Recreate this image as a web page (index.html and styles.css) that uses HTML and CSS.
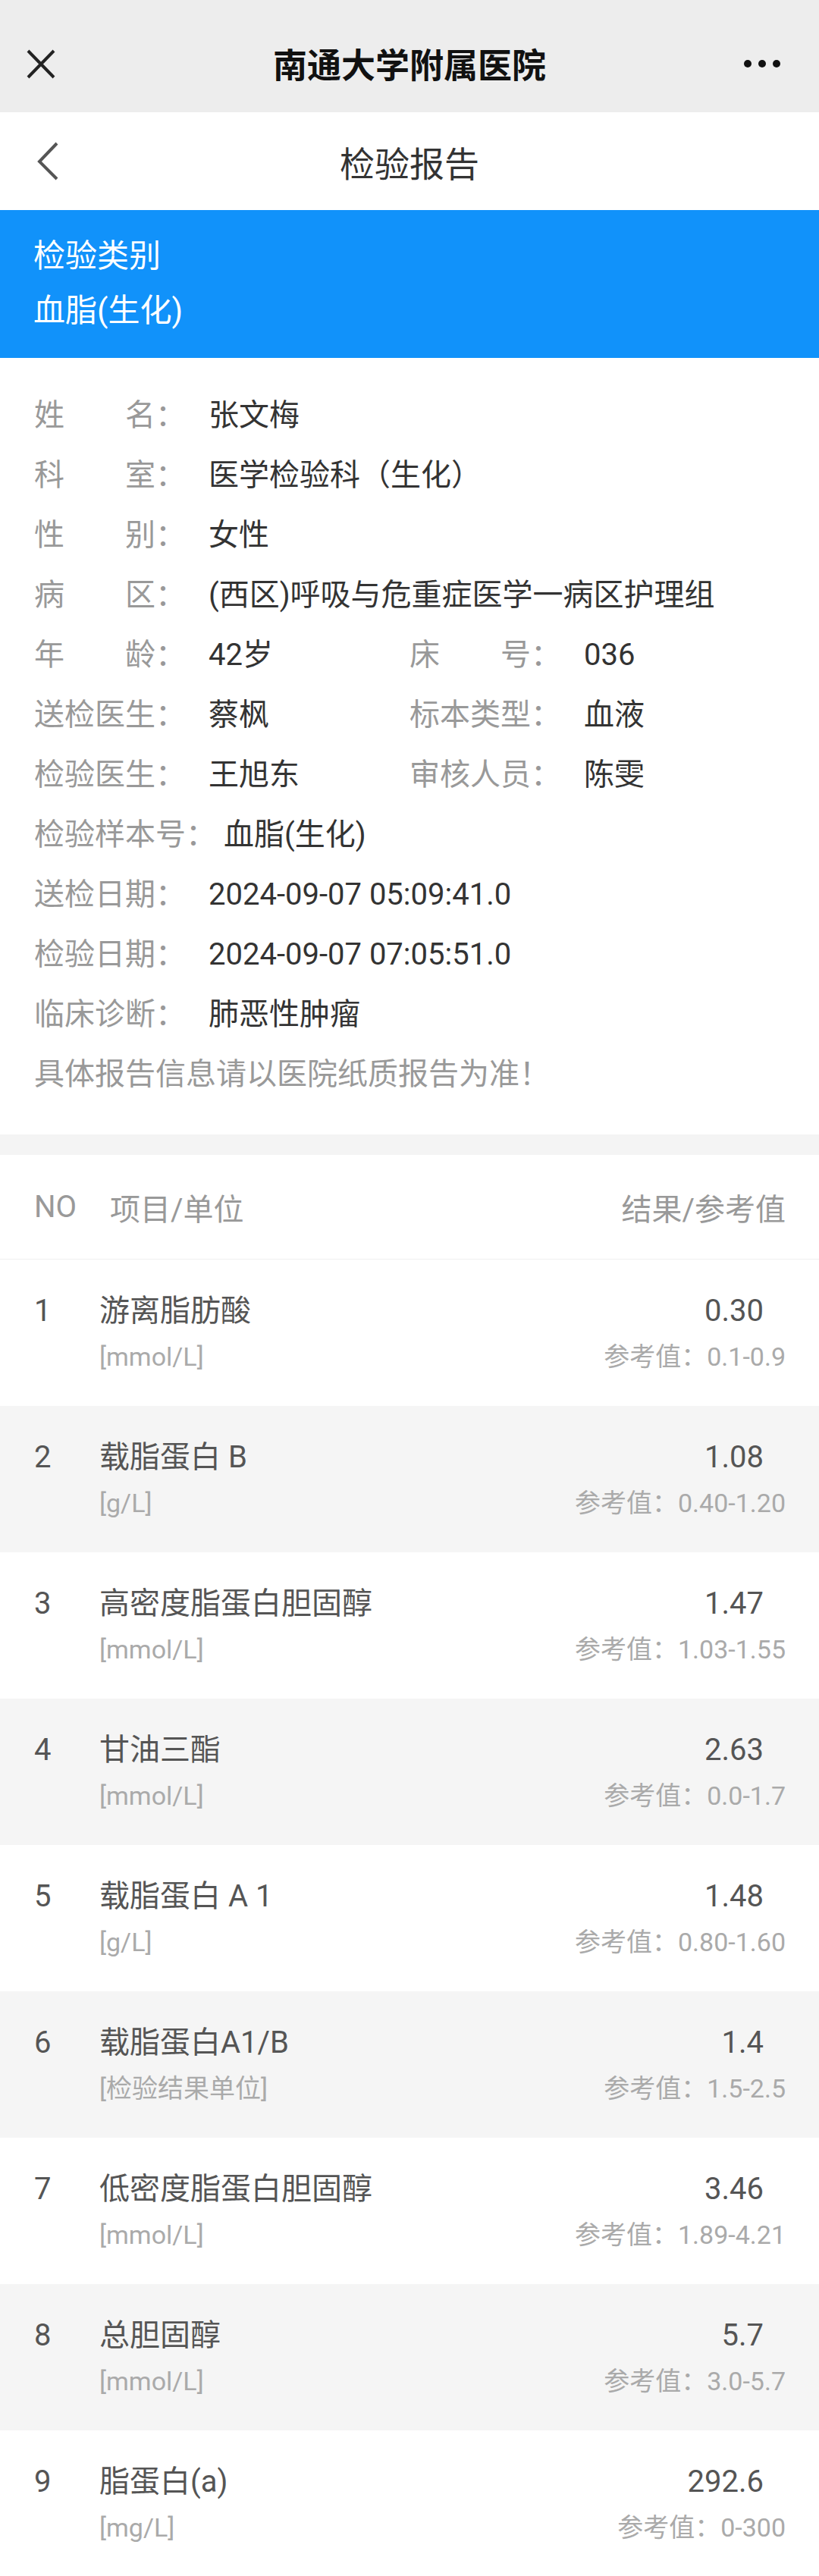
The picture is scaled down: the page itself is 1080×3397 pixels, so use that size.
FILE: index.html
```html
<!DOCTYPE html>
<html lang="zh-CN">
<head>
<meta charset="utf-8">
<title>检验报告</title>
<link rel="stylesheet" href="styles.css">
</head>
<body>
<div class="topbar">
  <svg class="close" width="38" height="39" viewBox="0 0 38 39"><path d="M2 2 L36 37 M36 2 L2 37" stroke="#222" stroke-width="4" fill="none"/></svg>
  <div class="top-title">南通大学附属医院</div>
  <svg class="more" width="48" height="12" viewBox="0 0 48 12"><circle cx="5" cy="6" r="5" fill="#111"/><circle cx="24" cy="6" r="5" fill="#111"/><circle cx="43" cy="6" r="5" fill="#111"/></svg>
</div>
<div class="navbar">
  <svg class="back" width="30" height="52" viewBox="0 0 30 52"><polyline points="27,2 4,26 27,49" stroke="#555" stroke-width="4" fill="none"/></svg>
  <div class="nav-title">检验报告</div>
  <div></div>
</div>
<div class="banner">
  <div>检验类别</div>
  <div>血脂(生化)</div>
</div>
<div class="info">
  <div class="irow"><div class="cell"><span class="lbl"><span class="j">姓名</span>：</span><span class="val">张文梅</span></div></div>
  <div class="irow"><div class="cell"><span class="lbl"><span class="j">科室</span>：</span><span class="val">医学检验科（生化）</span></div></div>
  <div class="irow"><div class="cell"><span class="lbl"><span class="j">性别</span>：</span><span class="val">女性</span></div></div>
  <div class="irow"><div class="cell"><span class="lbl"><span class="j">病区</span>：</span><span class="val">(西区)呼吸与危重症医学一病区护理组</span></div></div>
  <div class="irow two">
    <div class="cell"><span class="lbl"><span class="j">年龄</span>：</span><span class="val">42岁</span></div>
    <div class="cell"><span class="lbl"><span class="j">床号</span>：</span><span class="val">036</span></div>
  </div>
  <div class="irow two">
    <div class="cell"><span class="lbl">送检医生：</span><span class="val">蔡枫</span></div>
    <div class="cell"><span class="lbl">标本类型：</span><span class="val">血液</span></div>
  </div>
  <div class="irow two">
    <div class="cell"><span class="lbl">检验医生：</span><span class="val">王旭东</span></div>
    <div class="cell"><span class="lbl">审核人员：</span><span class="val">陈雯</span></div>
  </div>
  <div class="irow"><div class="cell"><span class="lbl">检验样本号：</span><span class="val">血脂(生化)</span></div></div>
  <div class="irow"><div class="cell"><span class="lbl">送检日期：</span><span class="val">2024-09-07 05:09:41.0</span></div></div>
  <div class="irow"><div class="cell"><span class="lbl">检验日期：</span><span class="val">2024-09-07 07:05:51.0</span></div></div>
  <div class="irow"><div class="cell"><span class="lbl">临床诊断：</span><span class="val">肺恶性肿瘤</span></div></div>
  <div class="irow note">具体报告信息请以医院纸质报告为准！</div>
</div>
<div class="gap"></div>
<div class="table">
  <div class="thead">
    <div class="th-no">NO</div>
    <div class="th-item">项目/单位</div>
    <div class="th-res">结果/参考值</div>
  </div>
  <div class="trow">
    <div class="no">1</div>
    <div class="item"><div class="name">游离脂肪酸</div><div class="unit">[mmol/L]</div></div>
    <div class="res"><div class="value">0.30</div><div class="ref">参考值：0.1-0.9</div></div>
  </div>
  <div class="trow alt">
    <div class="no">2</div>
    <div class="item"><div class="name">载脂蛋白 B</div><div class="unit">[g/L]</div></div>
    <div class="res"><div class="value">1.08</div><div class="ref">参考值：0.40-1.20</div></div>
  </div>
  <div class="trow">
    <div class="no">3</div>
    <div class="item"><div class="name">高密度脂蛋白胆固醇</div><div class="unit">[mmol/L]</div></div>
    <div class="res"><div class="value">1.47</div><div class="ref">参考值：1.03-1.55</div></div>
  </div>
  <div class="trow alt">
    <div class="no">4</div>
    <div class="item"><div class="name">甘油三酯</div><div class="unit">[mmol/L]</div></div>
    <div class="res"><div class="value">2.63</div><div class="ref">参考值：0.0-1.7</div></div>
  </div>
  <div class="trow">
    <div class="no">5</div>
    <div class="item"><div class="name">载脂蛋白 A 1</div><div class="unit">[g/L]</div></div>
    <div class="res"><div class="value">1.48</div><div class="ref">参考值：0.80-1.60</div></div>
  </div>
  <div class="trow alt">
    <div class="no">6</div>
    <div class="item"><div class="name">载脂蛋白A1/B</div><div class="unit">[检验结果单位]</div></div>
    <div class="res"><div class="value">1.4</div><div class="ref">参考值：1.5-2.5</div></div>
  </div>
  <div class="trow">
    <div class="no">7</div>
    <div class="item"><div class="name">低密度脂蛋白胆固醇</div><div class="unit">[mmol/L]</div></div>
    <div class="res"><div class="value">3.46</div><div class="ref">参考值：1.89-4.21</div></div>
  </div>
  <div class="trow alt">
    <div class="no">8</div>
    <div class="item"><div class="name">总胆固醇</div><div class="unit">[mmol/L]</div></div>
    <div class="res"><div class="value">5.7</div><div class="ref">参考值：3.0-5.7</div></div>
  </div>
  <div class="trow">
    <div class="no">9</div>
    <div class="item"><div class="name">脂蛋白(a)</div><div class="unit">[mg/L]</div></div>
    <div class="res"><div class="value">292.6</div><div class="ref">参考值：0-300</div></div>
  </div>
</div>
</body>
</html>
```

FILE: styles.css
```css
* { box-sizing: border-box; }
html, body {
  margin: 0;
  padding: 0;
  background: #fff;
  font-family: Roboto, "Noto Sans CJK SC", sans-serif;
}

.topbar {
  height: 148px;
  padding-top: 20px;
  background: #ededed;
  display: grid;
  grid-template-columns: 1fr auto 1fr;
  align-items: center;
}
.topbar .close { margin-left: 35px; display: block; }
.topbar .more { justify-self: end; margin-right: 51px; display: block; }
.top-title {
  font-family: "Noto Sans CJK SC", sans-serif;
  font-size: 45px;
  font-weight: 700;
  color: #111;
  line-height: 60px;
}

.navbar {
  height: 129px;
  background: #fff;
  display: grid;
  grid-template-columns: 1fr auto 1fr;
  align-items: center;
}
.navbar .back { margin-left: 48px; display: block; }
.nav-title {
  font-family: "Noto Sans CJK SC", sans-serif;
  font-size: 46px;
  color: #333;
  line-height: 60px;
}

.banner {
  background: #1192fa;
  color: #fff;
  font-size: 42px;
  line-height: 72px;
  padding: 25px 44px 26px;
}

.info {
  padding: 36px 45px 40px;
  font-size: 40px;
  line-height: 79px;
}
.irow { display: grid; grid-template-columns: 1fr; }
.irow.two { grid-template-columns: 495px 495px; }
.cell { display: flex; white-space: nowrap; }
.lbl {
  color: #999;
  min-width: 220px;
  margin-right: 10px;
}
.lbl .j {
  display: inline-block;
  width: 160px;
  text-align: justify;
  text-align-last: justify;
}
.val { color: #333; }
.note { color: #999; }

.gap { height: 27px; background: #f4f4f4; }

.thead {
  height: 138px;
  border-bottom: 1px solid #f0f0f0;
  display: flex;
  align-items: center;
  padding: 0 44px 0 45px;
  font-size: 40px;
  color: #999;
}
.th-no { width: 100px; }
.th-item { flex: 1; }

.trow {
  height: 193px;
  display: grid;
  grid-template-columns: 86px 1fr auto;
  padding: 43px 44px 40px 45px;
  color: #555;
}
.trow.alt { background: #f5f5f5; }
.no, .name, .value {
  font-size: 40px;
  line-height: 50px;
}
.unit, .ref {
  font-size: 34px;
  line-height: 50px;
  margin-top: 10px;
  color: #aaa;
  white-space: nowrap;
}
.res { text-align: right; }
.value { margin-right: 29px; }
```
